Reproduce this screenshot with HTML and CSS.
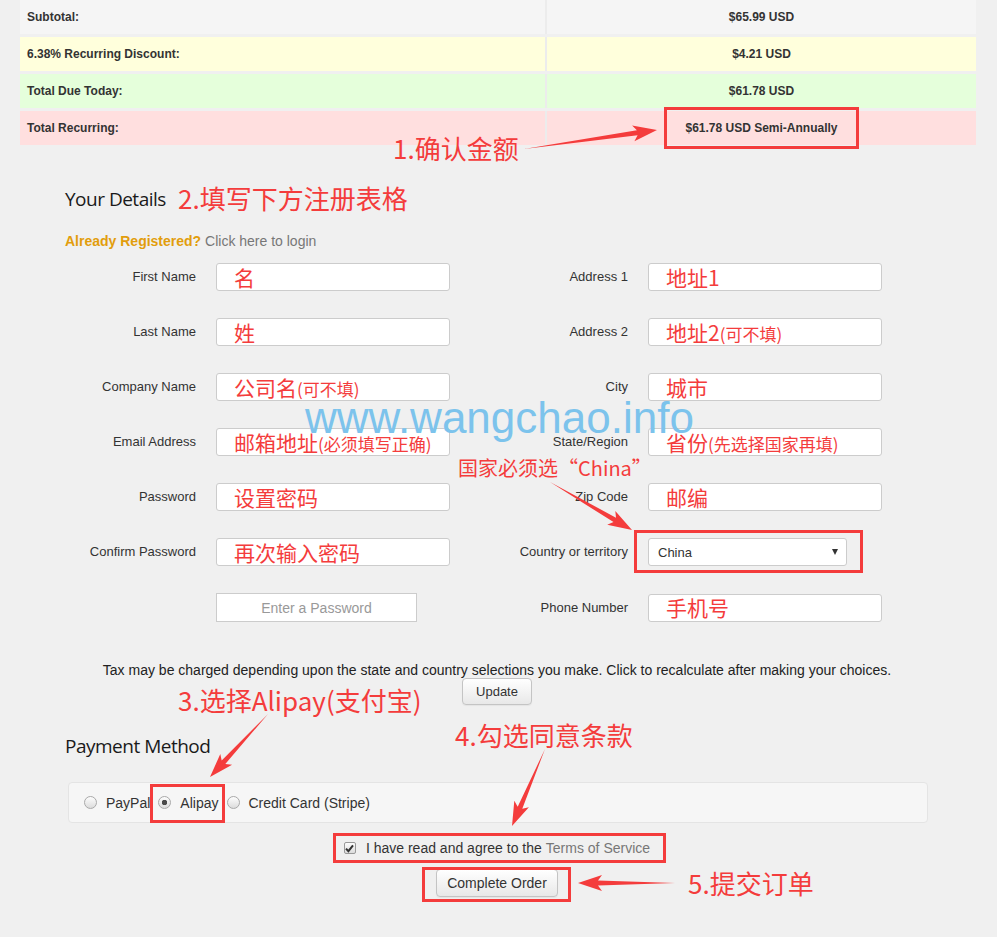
FILE: index.html
```html
<!DOCTYPE html>
<html lang="en">
<head>
    <meta charset="UTF-8">
    <meta name="viewport" content="width=device-width, initial-scale=1.0">
    <title>Checkout</title>
    <link rel="stylesheet" href="styles.css">
</head>
<body>
    <div class="totals">
        <div class="totals-row subtotal">
            <div class="cell label">Subtotal:</div>
            <div class="cell amount">$65.99 USD</div>
        </div>
        <div class="totals-row discount">
            <div class="cell label">6.38% Recurring Discount:</div>
            <div class="cell amount">$4.21 USD</div>
        </div>
        <div class="totals-row due">
            <div class="cell label">Total Due Today:</div>
            <div class="cell amount">$61.78 USD</div>
        </div>
        <div class="totals-row recurring">
            <div class="cell label">Total Recurring:</div>
            <div class="cell amount">$61.78 USD Semi-Annually</div>
        </div>
    </div>

    <div class="details">
        <h2>Your Details</h2>
        <p class="login-line"><strong>Already Registered?</strong> Click here to login</p>

        <div class="form-grid">
            <label>First Name</label>
            <div class="field"><span class="note">名</span></div>
            <label>Address 1</label>
            <div class="field"><span class="note">地址1</span></div>

            <label>Last Name</label>
            <div class="field"><span class="note">姓</span></div>
            <label>Address 2</label>
            <div class="field"><span class="note">地址2<small>(可不填)</small></span></div>

            <label>Company Name</label>
            <div class="field"><span class="note">公司名<small>(可不填)</small></span></div>
            <label>City</label>
            <div class="field"><span class="note">城市</span></div>

            <label>Email Address</label>
            <div class="field"><span class="note">邮箱地址<small>(必须填写正确)</small></span></div>
            <label>State/Region</label>
            <div class="field"><span class="note">省份<small>(先选择国家再填)</small></span></div>

            <label>Password</label>
            <div class="field"><span class="note">设置密码</span></div>
            <label>Zip Code</label>
            <div class="field"><span class="note">邮编</span></div>

            <label>Confirm Password</label>
            <div class="field"><span class="note">再次输入密码</span></div>
            <label>Country or territory</label>
            <div class="select-box"><span>China</span><span class="caret"></span></div>

            <span></span>
            <button type="button" class="generate-btn">Enter a Password</button>
            <label>Phone Number</label>
            <div class="field"><span class="note">手机号</span></div>
        </div>
    </div>

    <p class="tax-note">Tax may be charged depending upon the state and country selections you make. Click to recalculate after making your choices.</p>
    <div class="update-row"><button type="button" class="btn update-btn">Update</button></div>

    <div class="payment">
        <h2>Payment Method</h2>
        <div class="payment-box">
            <label class="radio-option"><span class="radio"></span>PayPal</label>
            <label class="radio-option"><span class="radio checked"></span>Alipay</label>
            <label class="radio-option"><span class="radio"></span>Credit Card (Stripe)</label>
        </div>
    </div>

    <div class="terms-row">
        <span class="checkbox">
            <svg width="9" height="9" viewBox="0 0 9 9"><path d="M1 4.6 L3.4 7.2 L8 1.4" fill="none" stroke="#333" stroke-width="2"/></svg>
        </span>
        I have read and agree to the <span class="tos">Terms of Service</span>
    </div>
    <div class="complete-row"><button type="button" class="btn complete-btn">Complete Order</button></div>

    <!-- annotation layer -->
    <div class="annotations">
        <div class="watermark">www.wangchao.info</div>

        <div class="tag tag-1">1.确认金额</div>
        <div class="tag tag-2">2.填写下方注册表格</div>
        <div class="tag tag-country">国家必须选“China”</div>
        <div class="tag tag-3">3.选择Alipay(支付宝)</div>
        <div class="tag tag-4">4.勾选同意条款</div>
        <div class="tag tag-5">5.提交订单</div>

        <div class="mark mark-total"></div>
        <div class="mark mark-country"></div>
        <div class="mark mark-alipay"></div>
        <div class="mark mark-terms"></div>
        <div class="mark mark-complete"></div>

        <svg class="arrows" width="997" height="937" viewBox="0 0 997 937">
            <g fill="#f43c3c">
                <polygon points="524,149 637.6,135.3 634.4,141.3 657,130 632.1,125.5 636.9,130.3"/>
                <polygon points="550,482 613.5,522.1 607.2,524.8 632,530 615.3,511 616,517.7"/>
                <polygon points="268,714 221.7,760.6 220.3,754 210,777 232.1,764.8 225.3,764"/>
                <polygon points="545,749 517.7,806.7 514.3,800.8 512,826 528.9,807.2 522.3,808.7"/>
                <polygon points="675,883 598,880.5 602,875 578,883 602,891 598,885.5"/>
            </g>
        </svg>
    </div>
</body>
</html>
```

FILE: styles.css
```css
body {
    margin: 0;
    padding-right: 3px;
    background: #f0f0f0;
    font-family: "Liberation Sans", Arial, sans-serif;
    color: #333;
    position: relative;
    min-height: 937px;
}

/* order totals */
.totals {
    margin-left: 20px;
    width: 956px;
    display: flex;
    flex-direction: column;
    gap: 3px;
    font-size: 12px;
    font-weight: bold;
    color: #333;
}

.totals-row {
    display: grid;
    grid-template-columns: 525px 1fr;
    column-gap: 2px;
    background: #ececec;
}

.cell {
    line-height: 34px;
    padding: 0 7px;
}

.amount {
    text-align: center;
}

.subtotal .cell { background: #f5f5f5; }
.discount .cell { background: #ffffdc; }
.due .cell { background: #e5ffdb; }
.recurring .cell { background: #ffdfdf; }

/* details form */
.details {
    padding-left: 65px;
}

h2 {
    font-family: "Open Sans", sans-serif;
    font-size: 19px;
    font-weight: 400;
    line-height: 30px;
    letter-spacing: -0.5px;
    color: #1a1a1a;
    margin: 39px 0 0;
}

.login-line {
    margin: 17px 0 12px;
    line-height: 20px;
    font-size: 14px;
    color: #777;
}

.login-line strong {
    color: #e29d0c;
}

.form-grid {
    display: grid;
    grid-template-columns: 131px 234px 158px 234px;
    column-gap: 20px;
    row-gap: 27px;
    align-items: center;
}

.form-grid label {
    text-align: right;
    font-size: 13px;
    line-height: 26px;
    color: #333;
}

.field {
    height: 28px;
    box-sizing: border-box;
    background: #fff;
    border: 1px solid #ccc;
    border-radius: 3px;
    padding-left: 17px;
    display: flex;
    align-items: center;
    white-space: nowrap;
}

.note {
    color: #f43c3c;
    font-family: "Noto Sans CJK SC", sans-serif;
    font-size: 21px;
    line-height: 1;
}

.note small {
    font-size: 17px;
}

.select-box {
    width: 199px;
    height: 28px;
    box-sizing: border-box;
    background: #fff;
    border: 1px solid #ccc;
    border-radius: 3px;
    padding: 0 8px 0 9px;
    display: flex;
    align-items: center;
    justify-content: space-between;
    font-size: 13px;
    color: #333;
}

.caret {
    width: 0;
    height: 0;
    border-left: 3.5px solid transparent;
    border-right: 3.5px solid transparent;
    border-top: 6px solid #333;
}

.generate-btn {
    width: 201px;
    height: 29px;
    background: #fff;
    border: 1px solid #ccc;
    font-family: "Liberation Sans", Arial, sans-serif;
    font-size: 14px;
    color: #999;
    padding: 0;
}

/* tax + buttons */
.tax-note {
    margin: 39px 0 0;
    font-size: 14px;
    line-height: 18px;
    text-align: center;
    color: #222;
}

.update-row {
    text-align: center;
    margin-top: -1px;
}

.btn {
    background: linear-gradient(#ffffff, #e8e8e8);
    border: 1px solid #c4c4c4;
    border-radius: 4px;
    font-family: "Liberation Sans", Arial, sans-serif;
    color: #333;
    padding: 0;
    box-shadow: 0 1px 1px rgba(0,0,0,0.05);
}

.update-btn {
    width: 70px;
    height: 27px;
    font-size: 13px;
}

/* payment */
.payment {
    padding-left: 65px;
}

.payment h2 {
    margin-top: 26px;
}

.payment-box {
    margin: 21px 0 0 3px;
    width: 860px;
    height: 41px;
    box-sizing: border-box;
    background: #f6f6f6;
    border: 1px solid #e4e4e4;
    border-radius: 4px;
    display: flex;
    align-items: center;
    padding-left: 15px;
    font-size: 14px;
    color: #333;
}

.radio-option {
    display: inline-flex;
    align-items: center;
    gap: 9px;
    margin-right: 8px;
}

.radio {
    width: 13px;
    height: 13px;
    box-sizing: border-box;
    border-radius: 50%;
    border: 1px solid #a9a9a9;
    background: linear-gradient(#fdfdfd, #dcdcdc);
}

.radio.checked {
    background: radial-gradient(circle, #4a4a4a 0 2.5px, transparent 3px), linear-gradient(#fdfdfd, #dcdcdc);
}

.terms-row {
    margin-top: 15px;
    line-height: 20px;
    font-size: 14px;
    color: #333;
    display: flex;
    justify-content: center;
    align-items: center;
}

.checkbox {
    width: 12px;
    height: 12px;
    box-sizing: border-box;
    border: 1px solid #999;
    border-radius: 2px;
    background: linear-gradient(#fdfdfd, #dcdcdc);
    display: inline-flex;
    align-items: center;
    justify-content: center;
    margin-right: 10px;
}

.tos {
    color: #777;
    margin-left: 4px;
}

.complete-row {
    text-align: center;
    margin-top: 11px;
}

.complete-btn {
    width: 122px;
    height: 28px;
    font-size: 14px;
}

/* annotation layer */
.annotations {
    position: absolute;
    top: 0;
    left: 0;
    width: 997px;
    height: 937px;
    pointer-events: none;
}

.arrows {
    position: absolute;
    top: 0;
    left: 0;
}

.watermark {
    position: absolute;
    left: 305px;
    top: 396px;
    font-family: "Liberation Sans", Arial, sans-serif;
    font-size: 44px;
    line-height: 44px;
    color: #7cc3ec;
    white-space: nowrap;
}

.tag {
    position: absolute;
    color: #f43c3c;
    font-family: "Noto Sans CJK SC", sans-serif;
    font-size: 26px;
    line-height: 26px;
    white-space: nowrap;
}

.tag-1 { left: 393px; top: 135px; }
.tag-2 { left: 178px; top: 185px; }
.tag-country { left: 458px; top: 458px; font-size: 20px; line-height: 20px; }
.tag-3 { left: 178px; top: 687px; }
.tag-4 { left: 455px; top: 722px; }
.tag-5 { left: 688px; top: 870px; }

.mark {
    position: absolute;
    border: 3px solid #f43c3c;
    box-sizing: border-box;
}

.mark-total { left: 664px; top: 107px; width: 195px; height: 42px; }
.mark-country { left: 634px; top: 530px; width: 229px; height: 43px; }
.mark-alipay { left: 150px; top: 784px; width: 75px; height: 39px; }
.mark-terms { left: 333px; top: 833px; width: 333px; height: 30px; }
.mark-complete { left: 422px; top: 867px; width: 149px; height: 35px; }
```
